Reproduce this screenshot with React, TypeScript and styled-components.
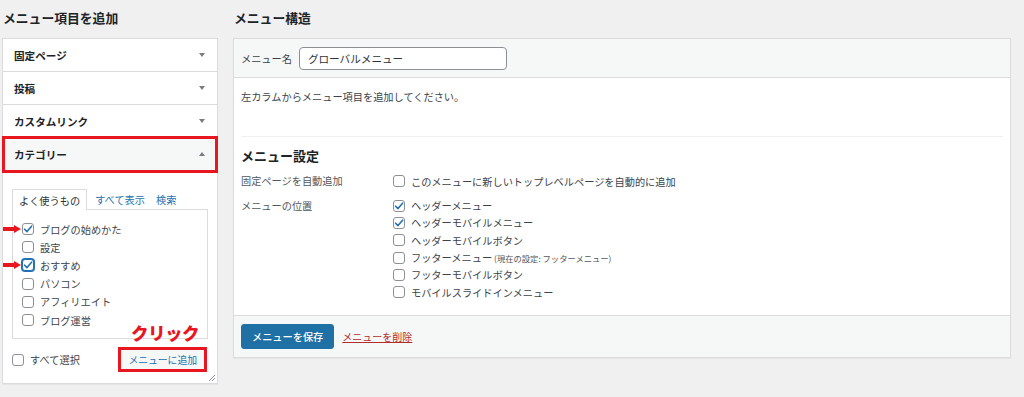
import React from 'react';
import styled, { createGlobalStyle } from 'styled-components';

const GlobalStyle = createGlobalStyle`
  html, body {
    margin: 0;
    padding: 0;
    background: #f0f0f1;
  }
  body {
    font-family: 'Noto Sans CJK JP', 'Noto Sans', sans-serif;
    font-size: 10.2px;
    color: #3c434a;
  }
`;

const Page = styled.div`
  display: flex;
  align-items: flex-start;
  gap: 15px;
  padding: 0 13px 0 2px;
  width: 1024px;
  height: 397px;
  box-sizing: border-box;
  overflow: hidden;
`;

const Column = styled.div<{ width: number }>`
  width: ${(p) => p.width}px;
  flex-shrink: 0;
  display: flex;
  flex-direction: column;
`;

const ColumnTitle = styled.h2`
  margin: 0;
  height: 38px;
  line-height: 36px;
  font-size: 12.8px;
  font-weight: 700;
  color: #1d2327;
  padding-left: 1px;
`;

/* ---------- left: accordion ---------- */

const Accordion = styled.div`
  background: #fff;
  border: 1px solid #dcdcde;
  box-shadow: 0 1px 1px rgba(0, 0, 0, 0.04);
`;

const SectionHead = styled.div<{ open?: boolean }>`
  position: relative;
  display: flex;
  align-items: center;
  justify-content: space-between;
  height: 32px;
  padding: 0 12px 0 11px;
  border-bottom: 1px solid #dcdcde;
  background: ${(p) => (p.open ? '#f6f7f7' : '#fff')};
  font-size: 10.6px;
  font-weight: 700;
  color: #1d2327;
  ${(p) => p.open && 'outline: 3px solid #e8161f; outline-offset: -2px; height: 34px; margin-top: -1px;'}
`;

const Caret = styled.span<{ up?: boolean }>`
  width: 0;
  height: 0;
  border-left: 3.5px solid transparent;
  border-right: 3.5px solid transparent;
  ${(p) => (p.up ? 'border-bottom' : 'border-top')}: 4px solid #787c82;
`;

const CategoryBody = styled.div`
  position: relative;
  padding: 17px 9px 11px 9px;
`;

const Tabs = styled.div`
  display: flex;
  align-items: flex-end;
  height: 20px;
`;

const Tab = styled.span<{ active?: boolean }>`
  display: flex;
  align-items: center;
  height: 20px;
  box-sizing: border-box;
  padding: ${(p) => (p.active ? '0 6px' : '0 4px')};
  margin-right: ${(p) => (p.active ? '4px' : '3px')};
  color: ${(p) => (p.active ? '#2c3338' : '#2271b1')};
  ${(p) =>
    p.active &&
    `border: 1px solid #dcdcde; border-bottom: none; background: #fff; margin-bottom: -1px; height: 21px; position: relative; z-index: 1;`}
`;

const TabPanel = styled.div`
  border: 1px solid #dcdcde;
  padding: 10px 9px 9px 9px;
  height: 130px;
  box-sizing: border-box;
`;

const CheckList = styled.div<{ pitch: number }>`
  display: flex;
  flex-direction: column;
  & > * {
    height: ${(p) => p.pitch}px;
  }
`;

const CheckRow = styled.label`
  position: relative;
  display: flex;
  align-items: center;
  gap: 6px;
  color: #3c434a;
  white-space: nowrap;
`;

const Box = styled.span<{ focus?: boolean }>`
  width: 12px;
  height: 12px;
  flex-shrink: 0;
  box-sizing: border-box;
  border: 1px solid ${(p) => (p.focus ? '#2271b1' : '#8c8f94')};
  border-radius: 3px;
  background: #fff;
  display: flex;
  align-items: center;
  justify-content: center;
  ${(p) => p.focus && 'box-shadow: 0 0 0 1px #2271b1;'}
`;

const Small = styled.span`
  font-size: 8.3px;
  color: #50575e;
  margin-left: 2px;
`;

const PointerArrow = styled.svg`
  position: absolute;
  left: -19px;
  top: 50%;
  margin-top: -4px;
`;

const Annotation = styled.span`
  position: absolute;
  left: 128px;
  bottom: 42px;
  font-size: 17.5px;
  font-weight: 900;
  color: #e8161f;
  letter-spacing: -0.5px;
  line-height: 1;
`;

const BottomBar = styled.div`
  display: flex;
  align-items: center;
  justify-content: space-between;
  margin-top: 8px;
`;

const AddButton = styled.button`
  height: 25px;
  padding: 0 7px;
  margin-right: 1px;
  font: inherit;
  font-size: 9.8px;
  color: #2271b1;
  background: #f6f7f7;
  border: 3px solid #e8161f;
  cursor: pointer;
`;

const Grip = styled.svg`
  position: absolute;
  right: 2px;
  bottom: 2px;
`;

/* ---------- right: menu structure ---------- */

const Panel = styled.div`
  background: #fff;
  border: 1px solid #dcdcde;
  box-shadow: 0 1px 1px rgba(0, 0, 0, 0.04);
`;

const PanelHeader = styled.div`
  display: flex;
  align-items: center;
  gap: 7px;
  height: 38px;
  padding: 0 7px;
  background: #f6f7f7;
  border-bottom: 1px solid #dcdcde;
  color: #3c434a;
`;

const NameInput = styled.div`
  width: 208px;
  height: 23px;
  box-sizing: border-box;
  display: flex;
  align-items: center;
  padding: 0 8px;
  background: #fff;
  border: 1px solid #8c8f94;
  border-radius: 4px;
  color: #2c3338;
  font-size: 10.6px;
`;

const PanelBody = styled.div`
  padding: 11px 7px 7px 7px;
`;

const Hint = styled.p`
  margin: 0;
  line-height: 15px;
`;

const Divider = styled.hr`
  border: none;
  border-top: 1px solid #f0f0f1;
  margin: 32px 0 0 0;
`;

const SettingsTitle = styled.h3`
  margin: 10px 0 7px 0;
  font-size: 13px;
  font-weight: 700;
  color: #1d2327;
  line-height: 18px;
`;

const SettingRow = styled.div`
  display: grid;
  grid-template-columns: 152px 1fr;
  margin-bottom: 7px;
`;

const SettingLabel = styled.div`
  color: #50575e;
  height: 18px;
  line-height: 18px;
`;

const PanelFooter = styled.div`
  display: flex;
  align-items: center;
  gap: 8px;
  height: 41px;
  padding: 0 7px;
  background: #f6f7f7;
  border-top: 1px solid #dcdcde;
`;

const SaveButton = styled.button`
  height: 25px;
  padding: 0 10px;
  font: inherit;
  font-size: 10.2px;
  font-weight: 500;
  color: #fff;
  background: #1f70a4;
  border: 1px solid #1f70a4;
  border-radius: 3px;
`;

const DeleteLink = styled.a`
  color: #b32d2e;
  text-decoration: underline;
  font-size: 10px;
  margin-top: 1px;
`;

const Tick = () => (
  <svg width="10" height="10" viewBox="0 0 10 10">
    <path d="M1.6 5.2 L4 7.6 L8.6 2.2" fill="none" stroke="#2271b1" strokeWidth="1.6" strokeLinecap="round" strokeLinejoin="round" />
  </svg>
);

const RedArrow = () => (
  <PointerArrow width="18" height="8" viewBox="0 0 18 8">
    <path d="M0 2 H11 V0 L18 4 L11 8 V6 H0 Z" fill="#e8161f" />
  </PointerArrow>
);

const Check: React.FC<{ checked?: boolean; focus?: boolean; arrow?: boolean; children: React.ReactNode }> = ({
  checked,
  focus,
  arrow,
  children,
}) => (
  <CheckRow>
    {arrow && <RedArrow />}
    <Box focus={focus}>{checked && <Tick />}</Box>
    <span>{children}</span>
  </CheckRow>
);

const categories = [
  { name: 'ブログの始めかた', checked: true, arrow: true },
  { name: '設定' },
  { name: 'おすすめ', checked: true, arrow: true, focus: true },
  { name: 'パソコン' },
  { name: 'アフィリエイト' },
  { name: 'ブログ運営' },
];

const locations = [
  { name: 'ヘッダーメニュー', checked: true },
  { name: 'ヘッダーモバイルメニュー', checked: true },
  { name: 'ヘッダーモバイルボタン' },
  { name: 'フッターメニュー', note: '(現在の設定: フッターメニュー)' },
  { name: 'フッターモバイルボタン' },
  { name: 'モバイルスライドインメニュー' },
];

const App = () => {
  return (
    <>
      <GlobalStyle />
      <Page>
        <Column width={216}>
          <ColumnTitle>メニュー項目を追加</ColumnTitle>
          <Accordion>
            <SectionHead>
              固定ページ
              <Caret />
            </SectionHead>
            <SectionHead>
              投稿
              <Caret />
            </SectionHead>
            <SectionHead>
              カスタムリンク
              <Caret />
            </SectionHead>
            <SectionHead open>
              カテゴリー
              <Caret up />
            </SectionHead>
            <CategoryBody>
              <Tabs>
                <Tab active>よく使うもの</Tab>
                <Tab>すべて表示</Tab>
                <Tab>検索</Tab>
              </Tabs>
              <TabPanel>
                <CheckList pitch={18.2}>
                  {categories.map((c) => (
                    <Check key={c.name} checked={c.checked} arrow={c.arrow} focus={c.focus}>
                      {c.name}
                    </Check>
                  ))}
                </CheckList>
              </TabPanel>
              <Annotation>クリック</Annotation>
              <BottomBar>
                <Check>すべて選択</Check>
                <AddButton>メニューに追加</AddButton>
              </BottomBar>
              <Grip width="6" height="6" viewBox="0 0 6 6">
                <path d="M6 0 L0 6 M6 3 L3 6" stroke="#8c8f94" strokeWidth="1" />
              </Grip>
            </CategoryBody>
          </Accordion>
        </Column>

        <Column width={778}>
          <ColumnTitle>メニュー構造</ColumnTitle>
          <Panel>
            <PanelHeader>
              <span>メニュー名</span>
              <NameInput>グローバルメニュー</NameInput>
            </PanelHeader>
            <PanelBody>
              <Hint>左カラムからメニュー項目を追加してください。</Hint>
              <Divider />
              <SettingsTitle>メニュー設定</SettingsTitle>
              <SettingRow>
                <SettingLabel>固定ページを自動追加</SettingLabel>
                <CheckList pitch={18}>
                  <Check>このメニューに新しいトップレベルページを自動的に追加</Check>
                </CheckList>
              </SettingRow>
              <SettingRow>
                <SettingLabel>メニューの位置</SettingLabel>
                <CheckList pitch={17.3}>
                  {locations.map((l) => (
                    <Check key={l.name} checked={l.checked}>
                      {l.name}
                      {l.note && <Small>{l.note}</Small>}
                    </Check>
                  ))}
                </CheckList>
              </SettingRow>
            </PanelBody>
            <PanelFooter>
              <SaveButton>メニューを保存</SaveButton>
              <DeleteLink>メニューを削除</DeleteLink>
            </PanelFooter>
          </Panel>
        </Column>
      </Page>
    </>
  );
};

export default App;
